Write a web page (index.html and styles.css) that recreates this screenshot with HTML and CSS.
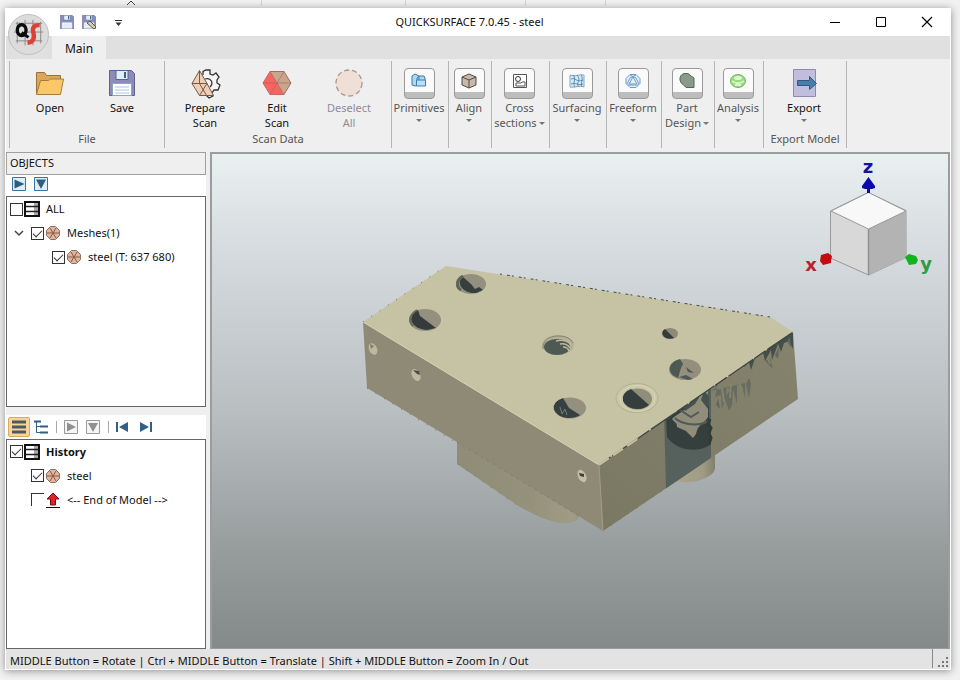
FILE: index.html
```html
<!DOCTYPE html>
<html lang="en">
<head>
<meta charset="utf-8">
<title>QUICKSURFACE 7.0.45 - steel</title>
<link rel="stylesheet" href="styles.css">
</head>
<body>
<svg class="defs" aria-hidden="true">
  <symbol id="floppy" viewBox="0 0 26 26">
    <path d="M.5.5h22l3 3v22H.5z" fill="#8f8bb8" stroke="#5f6188"/>
    <path d="M7 .5h12v9H7z" fill="#e3f0fa" stroke="#4f6a92"/>
    <path d="M15 2h2v6h-2z" fill="#3b5f92"/>
    <path d="M3.500 13.500h19v12h-19z" fill="#fff" stroke="#8aa3c8"/>
    <path d="M6 17h14M6 20h14M6 23h14" stroke="#a9c4e4"/>
  </symbol>
  <symbol id="mesh" viewBox="0 0 14 14">
    <path d="M4.500.5h5l4 4v5l-4 4h-5l-4-4v-5z" fill="#dfb59d" stroke="#8c7264"/>
    <path d="M1 7h12M4 2l6 10M10 2L4 12" stroke="#8a5a48" fill="none"/>
  </symbol>
  <symbol id="list" viewBox="0 0 16 16">
    <path d="M1 1h14v14H1z" fill="#fff" stroke="#111" stroke-width="2"/>
    <path d="M10 2h4v12h-4z" fill="#aaa"/>
    <path d="M2 5.500h12M2 10.500h12" stroke="#222" stroke-width="1.500"/>
  </symbol>
</svg>

<div class="backdrop" aria-hidden="true">
  <svg viewBox="0 0 960 8"><path d="M127 5l4-4 4 4" fill="none" stroke="#444"/><path d="M261.500 0v6M405.500 0v6M525.500 0v6M605.500 0v6" stroke="#d2d2d2"/></svg>
</div>

<div class="window">
  <header class="titlebar">
    <div class="quick">
      <button aria-label="Save"><svg width="14" height="14"><use href="#floppy"/></svg></button>
      <button aria-label="Save as"><svg width="15" height="15" viewBox="0 0 15 15"><use href="#floppy" width="14" height="14"/><path d="M5 8l3-2 6 6-2 2z" fill="#d9cba8" stroke="#5d5a5a"/></svg></button>
      <button class="more" aria-label="Customize toolbar"><svg width="7" height="7"><path d="M0 1.500h7" stroke="#333"/><path d="M.5 3.500h6l-3 3.500z" fill="#333"/></svg></button>
    </div>
    <h1>QUICKSURFACE 7.0.45 - steel</h1>
    <div class="winbtns">
      <button aria-label="Minimize"><svg width="12" height="12"><path d="M1 6.500h10" stroke="#000"/></svg></button>
      <button aria-label="Maximize"><svg width="12" height="12"><path d="M1.500 1.500h9v9h-9z" fill="none" stroke="#000"/></svg></button>
      <button aria-label="Close"><svg width="12" height="12"><path d="M1 1l10 10M11 1L1 11" stroke="#000" stroke-width="1.200"/></svg></button>
    </div>
  </header>
  <nav class="tabs"><button class="tab">Main</button></nav>
  <button class="appbtn" aria-label="Application menu">
    <svg viewBox="0 0 42 42">
      <circle cx="21" cy="21" r="20.500" fill="#dcdcdc" stroke="#bdbdbd"/>
      <path d="M8 9.500h27M6 18.500h30M8 27.500h27M9.500 8v22M17.500 6v26M25.500 6v26M33.500 8v22" stroke="#8a8a8a" fill="none"/>
      <ellipse cx="14" cy="16.500" rx="4.500" ry="5.500" fill="#dcdcdc" stroke="#0a0a0a" stroke-width="3.500"/>
      <path d="M14 19l7 5" stroke="#0a0a0a" stroke-width="3"/>
      <path d="M32.500 11.500c-6-.5-8 3-6.500 7.500 1.500 5.500 0 10-6 10.500" stroke="#df4034" stroke-width="4.500" fill="none"/>
    </svg>
  </button>

  <div class="ribbon">
    <section class="group file">
      <div class="tools">
        <button><svg width="32" height="32" viewBox="0 0 32 32"><path d="M2.500 27V5.500h8l2 3h14V13" fill="#dca858" stroke="#94723e"/><path d="M2.500 27.500l4-14h8l2-1.500h13l-3 15.500z" fill="#fbc869" stroke="#a67c3e"/></svg><span>Open</span></button>
        <button><svg width="32" height="32" viewBox="-3 -3 32 32"><use href="#floppy" width="26" height="26"/></svg><span>Save</span></button>
      </div>
      <h2>File</h2>
    </section>
    <section class="group scan">
      <div class="tools">
        <button><svg width="32" height="32" viewBox="0 0 32 32"><path d="M14 8V4.500l3-1.500h4v4l3 1 3-2 3 4-2 3v3l3 2-2 5h-4l-2 3 1 3-4 2-3-3" fill="#f5f5f5" stroke="#333" stroke-width="1.300"/><path d="M16 12c6-2 9 4 5 8" fill="none" stroke="#333" stroke-width="1.300"/><path d="M10.500 3.500l7.500 13 6.500 12H10.500l-7.500-12z" fill="#f1cdb4" stroke="#715b4f"/><path d="M3 16.500h15l-7.500 12M10.500 3.500v13l7 12" fill="none" stroke="#715b4f"/></svg><span>Prepare<br>Scan</span></button>
        <button><svg width="32" height="32" viewBox="0 0 32 32"><path d="M9 4.500h14l7 11.500-7 11.500H9L2 16z" fill="#c8a68d" stroke="#9b7167"/><path d="M9 4.500L23 27.500H9L2 16z" fill="#f4665f"/><path d="M2 16h28M9 4.500l14 23M23 4.500l-14 23" stroke="#a86358" stroke-opacity=".6" fill="none"/></svg><span>Edit<br>Scan</span></button>
        <button disabled><svg width="32" height="32" viewBox="0 0 32 32"><circle cx="16" cy="16" r="13" fill="#efdfd6" stroke="#aa9991" stroke-width="1.300" stroke-dasharray="5 3"/></svg><span>Deselect<br>All</span></button>
      </div>
      <h2>Scan Data</h2>
    </section>
    <section class="group drop w57"><button><i><svg viewBox="0 0 16 16"><path d="M1 3l3-2 4 2v9l-4 1-3-1zM8 3h5l1 2v5H6V5z" fill="#add7f2" stroke="#3e78a6"/><path d="M5.500 7h9v6h-9z" fill="#b9dff8" stroke="#427fae"/></svg></i><span>Primitives</span><b></b></button></section>
    <section class="group drop w43"><button><i><svg viewBox="0 0 16 16"><path d="M1 4l7-3 7 3v8l-7 3-7-3z" fill="#c8b8aa" stroke="#514a45"/><path d="M1 4l7 3v8M8 7l7-3" fill="none" stroke="#514a45"/></svg></i><span>Align</span><b></b></button></section>
    <section class="group drop w58"><button><i><svg viewBox="0 0 16 16"><path d="M1.500 1.500h13v13h-13z" fill="#fff" stroke="#555"/><circle cx="6" cy="6" r="2.500" fill="none" stroke="#333"/><path d="M4 13v-3h5l1-1h3v4z" fill="none" stroke="#555"/></svg></i><span>Cross<br>sections<b></b></span></button></section>
    <section class="group drop w57"><button><i><svg viewBox="0 0 16 16"><path d="M1 2c5 2 9-1 14 0v12c-5-2-9 1-14 0z" fill="#d6e9f6" stroke="#8ba7b8"/><path d="M2 6c5-2 5 4 12 1M2 11c5-2 7 2 12 0M4 2c4 4-1 8 2 12M8 2c5 5-2 8 2 12M12 2c3 4-1 8 1 12" fill="none" stroke="#407aa8" stroke-opacity=".8"/></svg></i><span>Surfacing</span><b></b></button></section>
    <section class="group drop w55"><button><i><svg viewBox="0 0 16 16"><path d="M5 1.500h6l4 4v5l-4 4H5l-4-4v-5z" fill="#e2effa" stroke="#6f9cc5"/><path d="M5 2l6 3 3 6M11 2L5 5l-3 6M3 12h10M8 4l-4 7h8z" fill="none" stroke="#6f9cc5"/></svg></i><span>Freeform</span><b></b></button></section>
    <section class="group drop w53"><button><i><svg viewBox="0 0 16 16"><path d="M1 7a6 6 0 0 1 11-4l3 2v9.500H7l-3-3A6 6 0 0 1 1 7z" fill="#879d87" stroke="#586558"/></svg></i><span>Part<br>Design<b></b></span></button></section>
    <section class="group drop w49"><button><i><svg viewBox="0 0 16 16"><ellipse cx="8" cy="8" rx="7.500" ry="6.500" fill="#95dc7b" stroke="#75b365"/><ellipse cx="8" cy="5" rx="4" ry="2" fill="#dcf8ce"/><path d="M2 8c4 3 8 3 12 0M5 12h6" stroke="#d9f5cc" stroke-width="2" fill="none"/></svg></i><span>Analysis</span><b></b></button></section>
    <section class="group export">
      <div class="tools"><button><svg width="32" height="32" viewBox="0 0 32 32"><path d="M5.500 2.500h22v27h-22z" fill="#c1bddd" stroke="#8e88b3"/><path d="M9.500 13.500h12v-4l7 7-7 6v-4h-12z" fill="#477eae" stroke="#34577b"/></svg><span>Export</span><b></b></button></div>
      <h2>Export Model</h2>
    </section>
  </div>

  <main class="work">
    <aside class="side">
      <h2 class="head">OBJECTS</h2>
      <div class="bar play">
        <button aria-label="Expand all"><svg width="14" height="14"><path d="M.5.5h13v13H.5z" fill="#dceffa" stroke="#35749c"/><path d="M2.500 2.500l10 4.500-10 4.500z" fill="#315b7c"/></svg></button>
        <button aria-label="Filter"><svg width="14" height="14"><path d="M.5.5h13v13H.5z" fill="#dceffa" stroke="#35749c"/><path d="M2 2.500h10l-5 9.500z" fill="#315b7c"/></svg></button>
      </div>
      <div class="tree">
        <label class="row"><input type="checkbox"><svg width="16" height="16"><use href="#list"/></svg><span>ALL</span></label>
        <label class="row lv1"><svg class="chev" width="10" height="8"><path d="M1 2l4 4 4-4" fill="none" stroke="#444" stroke-width="1.500"/></svg><input type="checkbox" checked><svg class="m" width="14" height="14"><use href="#mesh"/></svg><span>Meshes(1)</span></label>
        <label class="row lv2"><input type="checkbox" checked><svg class="m" width="14" height="14"><use href="#mesh"/></svg><span>steel (T: 637 680)</span></label>
      </div>
      <div class="bar history">
        <button class="on" aria-label="List view"><svg width="14" height="14"><path d="M0 2h14M0 7h14M0 12h14" stroke="#4d5960" stroke-width="3"/></svg></button>
        <button aria-label="Tree view"><svg width="14" height="14"><path d="M0 1.500h7M6 6.500h8M6 12.500h8" stroke="#315f80" stroke-width="2"/><path d="M2.500 2v10.500H6M3 6.500h3" fill="none" stroke="#315f80"/></svg></button>
        <hr>
        <button aria-label="Play"><svg width="14" height="14"><path d="M.5.5h13v13H.5z" fill="#f5f5f5" stroke="#999"/><path d="M3 2.500l9 4.500-9 4.500z" fill="#909090"/></svg></button>
        <button aria-label="Filter history"><svg width="14" height="14"><path d="M.5.5h13v13H.5z" fill="#f5f5f5" stroke="#999"/><path d="M2 3h10l-5 9z" fill="#909090"/></svg></button>
        <hr>
        <button aria-label="First step"><svg width="12" height="12"><path d="M0 1h2v10H0zM12 1v10L3 6z" fill="#315f86"/></svg></button>
        <button aria-label="Last step"><svg width="12" height="12"><path d="M10 1h2v10h-2zM0 1v10l9-5z" fill="#315f86"/></svg></button>
      </div>
      <div class="tree">
        <label class="row bold"><input type="checkbox" checked><svg width="16" height="16"><use href="#list"/></svg><span>History</span></label>
        <label class="row lv1b"><input type="checkbox" checked><svg class="m" width="14" height="14"><use href="#mesh"/></svg><span>steel</span></label>
        <label class="row lv1b"><input class="open" type="checkbox"><svg class="m" width="14" height="16"><path d="M7 1l6 6H9.500v6h-5V7H1z" fill="#e3212b" stroke="#6b1116"/><path d="M0 15.500h14" stroke="#111"/></svg><span>&lt;-- End of Model --&gt;</span></label>
      </div>
    </aside>

    <section class="view" aria-label="3D view">
      <svg class="model" viewBox="212 154 736 494" role="img" aria-label="Scanned steel part">
        <defs>
          <linearGradient id="bossl" x1="0" x2="1"><stop offset="0" stop-color="#8f8c77"/><stop offset=".6" stop-color="#95927b"/><stop offset=".9" stop-color="#a09c84"/><stop offset="1" stop-color="#96927d"/></linearGradient>
          <linearGradient id="boss" x1="0" x2="1"><stop offset="0" stop-color="#aaa68c"/><stop offset=".7" stop-color="#9f9b85"/><stop offset="1" stop-color="#827f6c"/></linearGradient>
          <linearGradient id="rf" x1="0" x2="1" y1="1" y2="0"><stop offset="0" stop-color="#7a7763"/><stop offset="1" stop-color="#86836d"/></linearGradient>
          <clipPath id="right"><path d="M599 465l194-133 5 67-195 132z"/></clipPath>
        </defs>
        <path d="M457 440v24l63 43c18 10 33 16 45 16 9 0 14-3 14-8l5-12z" fill="url(#bossl)"/>
        <path d="M675 470v11c14 3 27 0 34-5 5-3 6-6 6-9v-16z" fill="url(#boss)"/>
        <path d="M363 322l236 143 4 66-146-89-90-54z" fill="#8e8a76"/>
        <path d="M599 465l194-133 5 67-195 132z" fill="url(#rf)"/>
        <g clip-path="url(#right)">
          <path d="M664 410l47-28v78l-45 31z" fill="#56615d"/>
          <path d="M666 416l42-28 2 57c-12 8-34 6-43-8z" fill="#353f3e"/>
          <path d="M672 419c8-7 17-10 36-31v29c-6 9-10 7-12 17l-3 4-7-7-9-4c0-5-2-4-5-8z" fill="#918d7b"/>
          <path d="M675 418c5 5 20 10 34 3M680 410l11 7 8-5" fill="none" stroke="#515a55" stroke-width="2"/>
          <path d="M683 408l19-15-7 11-10 7zM704 391l5 5-1 13-7-9z" fill="#46504c"/>
          <path d="M793 332v17l-4-8-5 2-3 9-3-8-6 16-1-10-6 11-2-9-7 3-5 15-2-8-5 5-8-3-7 12-3-5-10 16-3-6-9 7z" fill="#444e4a"/>
          <path d="M711 391l6-4-2 10 6-2 1 14 3-10 4 12 3-6 1-16 4 15v-20l5 2 3 12v-15zM749 378l2 6-2 14-3-14zM765 361l5-3 3 11-3-3zM727 386l3 4-4 6z" fill="#666c62"/>
          <path d="M775 355l4-8-1 12zM787 341l3-4 1 11zM716 405l4 4-2-11z" fill="#606660"/>
          <path d="M722 388l2 14M731 384l-1 14M739 382l3 8M755 368l2 4M768 358l2 6" stroke="#86836d" stroke-width="2"/>
          <path d="M710 419l-2 5 3 4-2 5 2 5-2 6" fill="none" stroke="#303a38" stroke-width="3"/>
        </g>
        <path d="M363 322l83-56 324 51 23 15-194 133z" fill="#c5c3a3"/>
        <path d="M363 322l236 143" stroke="#d3d1b3"/>
        <path d="M599 465l194-133" stroke="#3e4640" stroke-dasharray="14 2 30 1" stroke-width="1.300"/>
        <path d="M599 465l40-27" stroke="#c5c3a3" stroke-width="2" stroke-dasharray="12 5"/>
        <path d="M500 274l270 43" stroke="#454c43" stroke-dasharray="2 5 3 2"/>
        <path d="M363 322l83-56M367 388l90 55M458 464l62 43M603 531l60-41" fill="none" stroke="#6d6e5e" stroke-dasharray="1 9"/>
        <path d="M457 442l124 75" stroke="#7d7a66" stroke-dasharray="2 5"/>
        <path d="M599 465l4 66" stroke="#a09c85"/>
        <g>
          <ellipse cx="471" cy="284" rx="15" ry="10" fill="#949080"/><path d="M463 277a15 10 0 0 0 13 16l7-3-4-3-4 2-4-5-8-7z" fill="#363f3d"/><path d="M463 276c-7 4-7 11-2 14" fill="none" stroke="#5f635a" stroke-width="3"/>
          <ellipse cx="425" cy="320" rx="16" ry="11" fill="#948f7e"/><path d="M418 310a16 11 0 0 0 9 20l9-2-16-12z" fill="#333c3a"/><path d="M417 310c-7 4-9 11-4 16" fill="none" stroke="#68685c" stroke-width="2"/>
          <ellipse cx="558" cy="345" rx="16" ry="10" fill="#b5b195"/><ellipse cx="557" cy="347" rx="13" ry="8" fill="#4e5954"/><path d="M556 341c6-2 13 0 15 4M560 344c5-1 8 1 10 4M563 347c3 0 5 1 6 4" fill="none" stroke="#bdb99f" stroke-width="1.500"/><path d="M543 349c-1-8 6-13 15-13s13 3 15 7" fill="none" stroke="#858371"/>
          <ellipse cx="670" cy="333.500" rx="8" ry="5.500" fill="#8d8978"/><path d="M665 329a8 5.500 0 0 0 9 9z" fill="#343d3a"/>
          <ellipse cx="685" cy="369.500" rx="16" ry="10.500" fill="#948f7c"/><path d="M680 359a16 10.500 0 0 0-2 19l3-10 2-4zM686 367l8 6-6-1zM679 377l9 3 5-1-7-4z" fill="#4e5954"/>
          <ellipse cx="637" cy="398" rx="21" ry="14.500" fill="#cac7a7" stroke="#b3b093"/><ellipse cx="637.500" cy="398.500" rx="17.500" ry="13" fill="none" stroke="#dbd8ba"/><ellipse cx="637.500" cy="399" rx="14.500" ry="10.500" fill="#918d7b"/><path d="M631 389a14.500 10.500 0 0 0 7 20c5 0 8-2 11-4z" fill="#333e3d"/>
          <ellipse cx="570" cy="408" rx="16" ry="10.500" fill="#949080"/><path d="M563 398a16 10.500 0 0 0 5 20c5 0 10-1 12-3l-11-7z" fill="#36403e"/><path d="M560 407l2 7 3-5 2 6" fill="none" stroke="#6c7c75"/>
        </g>
        <ellipse cx="373" cy="349" rx="4" ry="6" fill="#beb89e" transform="rotate(-25 373 349)"/><path d="M370 344l4 2-3 3z" fill="#7b7868"/>
        <ellipse cx="416" cy="375" rx="4" ry="6.500" fill="#beb89e" transform="rotate(-28 416 375)"/><path d="M413 370l6 1 1 4-3-1z" fill="#4b4c43"/>
        <ellipse cx="582" cy="476" rx="4" ry="6.500" fill="#c4bfa6" transform="rotate(-25 582 476)"/><path d="M579 473l5 1v3l-4-1z" fill="#3e413a"/>
      </svg>
      <svg class="cube" viewBox="800 156 140 124" role="img" aria-label="View cube">
        <path d="M830.500 211l37.500-18.500 38 18v47L868.500 275 830.500 258z" fill="#d8d8d8" stroke="#999"/>
        <path d="M868.500 229l37.500-18v47l-37.500 17z" fill="#b3b3b3"/>
        <path d="M831 211l37.500-18.500L906 211l-37.500 18z" fill="#f8f8f8" stroke="#999"/>
        <path d="M868.500 229v46" stroke="#929292" stroke-width="1.500"/>
        <path d="M868.500 177l6.500 9v2l-3 1h-2v4h-3v-4h-2l-3-1v-2z" fill="#0c08ae"/>
        <path d="M821 255l7-2 4 3-1 5 0 2-8 2-3-4z" fill="#c50a10"/>
        <path d="M905 257l4-3 7 2 2 4-2 4-7 1z" fill="#10b51c"/>
        <text x="868" y="173" fill="#1712a0">z</text><text x="811" y="271" fill="#b8222c">x</text><text x="926" y="270" fill="#2b9c46">y</text>
      </svg>
    </section>
  </main>

  <footer class="status"><span>MIDDLE Button = Rotate | Ctrl + MIDDLE Button = Translate | Shift + MIDDLE Button = Zoom In / Out</span>
    <svg width="12" height="12"><path d="M8 1h2v2H8zM4 5h2v2H4zM8 5h2v2H8zM0 9h2v2H0zM4 9h2v2H4zM8 9h2v2H8z" fill="#777"/></svg>
  </footer>
</div>
</body>
</html>
```

FILE: styles.css
```css
* { box-sizing: border-box; }
body {
  margin: 0;
  height: 100vh;
  display: flex;
  flex-direction: column;
  background: #f1f1f1;
  font: 12px/16px "Noto Sans", "Open Sans", sans-serif;
  color: #111;
}
h1, h2 { margin: 0; font-size: 12px; font-weight: 400; }
button { border: 0; padding: 0; background: none; font: inherit; color: inherit; }
svg { display: block; flex: none; }
.defs { position: absolute; width: 0; height: 0; }
.backdrop { height: 8px; flex: none; }
.backdrop svg { width: 100%; height: 8px; }

.window {
  position: relative;
  flex: 1;
  min-height: 0;
  margin: 0 9px 10px 5px;
  display: flex;
  flex-direction: column;
  background: #efefef;
  border: 1px solid #fff;
  border-top: 0;
  box-shadow: 0 1px 8px #0006;
}

.titlebar { height: 28px; flex: none; display: grid; grid-template-columns: 1fr auto 1fr; align-items: center; padding-right: 17px; background: #fff; }
.titlebar h1 { font-size: 11px; }
.quick { display: flex; align-items: center; gap: 8px; padding-left: 54px; }
.quick .more { margin-left: 10px; }
.winbtns { display: flex; justify-content: flex-end; gap: 34px; }

.tabs { height: 23px; flex: none; display: flex; padding-left: 46px; background: #e0e0e0; }
.tab { width: 54px; padding-top: 2px; background: #efefef; }
.appbtn { position: absolute; left: 2px; top: 6px; width: 41px; height: 41px; }

.ribbon { height: 93px; flex: none; display: flex; padding: 2px 0 4px 3px; }
.group { display: flex; flex-direction: column; justify-content: space-between; border-left: 1px solid #b5b5b5; font-size: 11px; line-height: 15px; text-align: center; }
.group h2 { padding-bottom: 1px; font-size: 11px; line-height: 16px; color: #555; }
.tools { display: flex; padding-left: 4px; }
.tools button { width: 72px; padding-top: 6px; display: flex; flex-direction: column; align-items: center; }
.tools svg { margin-bottom: 1px; }
.group span { display: block; }
.group button:disabled { color: #8f8b99; }
.file { width: 155px; }
.scan { width: 227px; }
.export { width: 84px; border-right: 1px solid #b5b5b5; }
.drop { padding-right: 2px; color: #555; white-space: nowrap; }
.drop button { padding-top: 7px; display: flex; flex-direction: column; align-items: center; }
.drop i {
  width: 31px;
  height: 31px;
  margin-bottom: 1px;
  border: 1px solid #999;
  border-radius: 4px;
  background: linear-gradient(#fafafa 23px, #bdbdbd 23px);
  display: flex;
  justify-content: center;
  padding-top: 4px;
}
.drop i svg { width: 16px; height: 16px; }
.group b { display: block; width: 5px; margin: 4px auto 0; border: 3px solid transparent; border-top-color: #777; border-bottom: 0; }
.group span b { display: inline-block; margin: 0 0 2px 2px; }
.w57 { width: 57px; }
.w43 { width: 43px; }
.w58 { width: 58px; }
.w55 { width: 55px; }
.w53 { width: 53px; }
.w49 { width: 49px; }

.work { flex: 1; min-height: 0; display: flex; gap: 4px; }
.side { width: 200px; flex: none; display: flex; flex-direction: column; }
.head { height: 23px; flex: none; border: 1px solid #a0a0a0; padding: 2px 3px; font-size: 11px; line-height: 16px; }
.bar { display: flex; align-items: center; flex: none; background: #fff; }
.play { height: 21px; gap: 8px; padding: 0 0 4px 6px; }
.tree { flex: 1; min-height: 0; border: 1px solid #666; background: #fff; overflow: hidden; font-size: 11px; }
.history { height: 24px; margin-top: 8px; gap: 8px; padding-left: 2px; }
.history .on { width: 22px; height: 20px; margin-right: -4px; display: grid; place-items: center; border: 1px solid #dba85e; border-radius: 2px; background: #f8d39b; }
.history hr { width: 1px; height: 12px; margin: 0 -1px 0 0; border: 0; background: #aaa; }
.history button:nth-last-child(-n+2) { padding-right: 4px; }
.row { height: 24px; display: flex; align-items: center; padding-left: 3px; }
.lv1 { padding-left: 7px; }
.lv1b { padding-left: 24px; }
.lv2 { padding-left: 45px; }
.chev { margin-right: 7px; }
.row .m { margin: 0 1px; }
.row span { margin-left: 6px; }
.row input { appearance: none; width: 13px; height: 13px; margin: 0 1px 0 0; border: 1px solid #333; background: #fff; display: grid; place-items: center; }
.row input:checked::before { content: ""; width: 8px; height: 4px; border: solid #333; border-width: 0 0 1px 1px; transform: translateY(-1px) rotate(-45deg); }
.row .open { border-width: 1px 0 0 1px; }
.bold { font-weight: 700; }

.view {
  position: relative;
  flex: 1;
  min-width: 0;
  border: 2px solid #999d9d;
  border-bottom-width: 1px;
  background: linear-gradient(#e9f0f0, #d4dadd 21%, #b9bec1 52%, #979c9d 80%, #848989);
}
.model { width: 100%; height: 100%; }
.cube { position: absolute; right: 8px; top: 2px; width: 140px; height: 124px; }
.cube text { font: 700 18px "DejaVu Sans", sans-serif; text-anchor: middle; }

.status { height: 20px; flex: none; display: flex; justify-content: space-between; align-items: center; padding-left: 4px; background: #e3e3e3; font-size: 11px; }
.status span { padding-top: 3px; }
.status svg { align-self: stretch; box-sizing: content-box; height: 12px; padding: 7px 0 0 5px; border-left: 1px solid #888; }
```
